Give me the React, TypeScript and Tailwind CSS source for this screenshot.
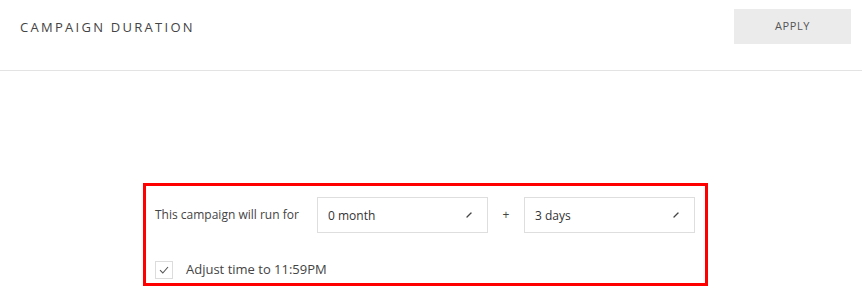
import React from 'react';

const Caret = () => (
  <svg width="6" height="6" viewBox="0 0 6 6" className="shrink-0">
    <path d="M1 5 L5 1" stroke="#444" strokeWidth="1.3" strokeLinecap="round" />
  </svg>
);

function Select({ value }: { value: string }) {
  return (
    <div className="w-[171px] h-[36px] border border-[#dedede] bg-white flex items-center justify-between pl-[10px] pr-[15px]">
      <span className="text-[12px] text-[#333] pt-[2px]">{value}</span>
      <Caret />
    </div>
  );
}

export default function App() {
  return (
    <div className="w-[862px] h-[304px] bg-white overflow-hidden" style={{ fontFamily: '"Open Sans", "Liberation Sans", sans-serif' }}>
      {/* Header */}
      <div className="h-[71px] border-b border-[#e3e3e3] flex items-start justify-between pl-5 pr-[11px] pt-[9px]">
        <div className="h-[35px] flex items-center pt-[2px]">
          <h1 className="text-[13px] tracking-[0.175em] text-[#444] font-normal">CAMPAIGN DURATION</h1>
        </div>
        <button className="w-[117px] h-[35px] bg-[#ebebeb] text-[11px] tracking-[0.05em] text-[#555]">
          APPLY
        </button>
      </div>

      {/* Duration box */}
      <div className="ml-[143px] mt-[112px] w-[565px] border-[3px] border-[#ff0000] pt-[11px] pb-[4px] pl-[9px] pr-[10px]">
        <div className="flex items-center h-[36px]">
          <span className="w-[162px] text-[12px] text-[#444]">This campaign will run for</span>
          <Select value="0 month" />
          <span className="w-[36px] text-center text-[12px] text-[#444]">+</span>
          <Select value="3 days" />
        </div>
        <div className="mt-[28px] flex items-center h-[18px]">
          <div className="w-[18px] h-[18px] border border-[#dcdcdc] flex items-center justify-center">
            <svg width="10" height="8" viewBox="0 0 10 8">
              <path d="M1 4.2 L3.8 7 L9 1" fill="none" stroke="#555" strokeWidth="1.1" />
            </svg>
          </div>
          <span className="ml-[13px] text-[13px] text-[#444]">Adjust time to 11:59PM</span>
        </div>
      </div>
    </div>
  );
}
